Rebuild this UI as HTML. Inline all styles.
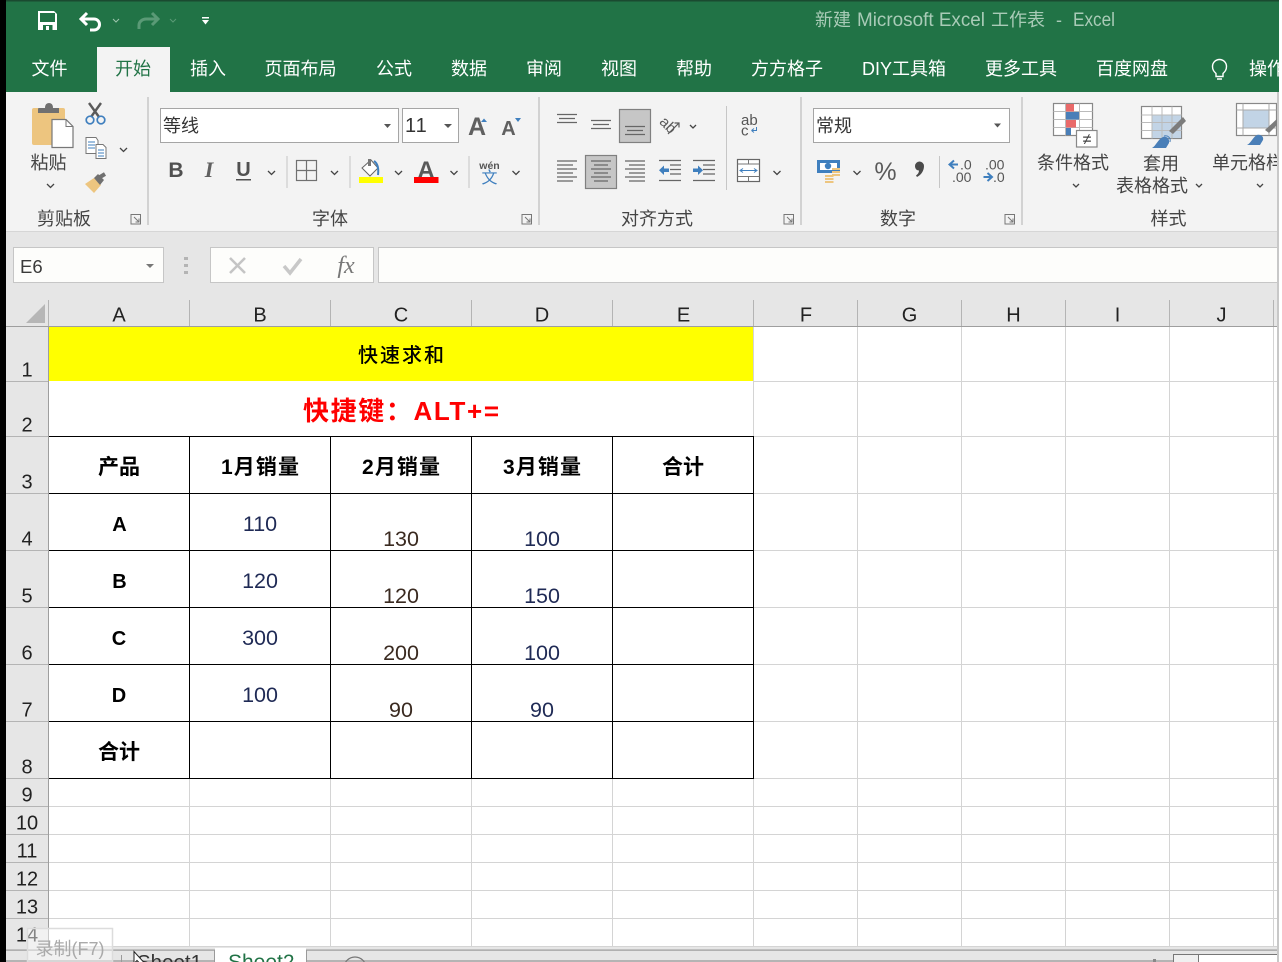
<!DOCTYPE html>
<html><head><meta charset="utf-8"><style>
html,body{margin:0;padding:0;background:#fff;width:1282px;height:962px;overflow:hidden}
svg{display:block}
text{font-family:"Liberation Sans","Noto Sans CJK SC",sans-serif}
.r{font-size:18px;fill:#444;text-anchor:middle}
.t{font-size:18px;fill:#fff;text-anchor:middle}
.h{font-size:20px;fill:#222;text-anchor:middle}
.n{font-size:21.500px;fill:#1f2a55;text-anchor:middle}
.m{font-size:21.500px;fill:#3a2a20;text-anchor:middle}
.b{font-size:20px;fill:#000;text-anchor:middle;font-weight:bold}
.c{fill:none;stroke:#444;stroke-width:1.3}
.l{fill:none;stroke:#666;stroke-width:1.200}
</style></head><body>
<svg width="1282" height="962" viewBox="0 0 1282 962" xmlns="http://www.w3.org/2000/svg">
<rect width="1282" height="962" fill="#fff"/>
<rect x="0" y="0" width="1279" height="92" fill="#217346"/>
<rect x="0" y="0" width="1279" height="1.500" fill="#1a4a30"/>
<rect x="97" y="47" width="73" height="45" fill="#f3f3f3"/>

<!-- QAT -->
<path d="M38 11h16l3 3v16H38z" fill="#fff"/><rect x="40" y="13" width="15" height="9" fill="#217346"/><rect x="43" y="25" width="9.500" height="5" fill="#217346"/><rect x="46" y="26" width="3" height="4" fill="#fff"/>
<path d="M87 13l-6 6 6 6M81 19h13a5.500 5.500 0 0 1 0 11h-4" fill="none" stroke="#fff" stroke-width="3"/>
<path d="M113 19l3 3 3-3" fill="none" stroke="#9fc5ae" stroke-width="1"/>
<path d="M152 13l6 6-6 6M158 19h-12c-4 0-7 3-7 6v4" fill="none" stroke="#5a9a76" stroke-width="3"/>
<path d="M170 19l3 3 3-3" fill="none" stroke="#5a9a76" stroke-width="1"/>
<rect x="202" y="17" width="7" height="1.500" fill="#fff"/><path d="M202 20h7l-3.500 4.500z" fill="#fff"/>
<text x="815" y="26" font-size="18" fill="#a9cbb7">新建</text>
<text x="857" y="26" font-size="19" fill="#a9cbb7" textLength="128" lengthAdjust="spacingAndGlyphs">Microsoft Excel</text>
<text x="991" y="26" font-size="18" fill="#a9cbb7">工作表</text>
<text x="1056" y="26" font-size="18" fill="#a9cbb7">-</text>
<text x="1073" y="26" font-size="19" fill="#a9cbb7" textLength="42" lengthAdjust="spacingAndGlyphs">Excel</text>

<!-- tabs -->
<text class="t" x="49.500" y="75">文件</text>
<text class="t" x="133" y="75" style="fill:#217346">开始</text>
<text class="t" x="208" y="75">插入</text>
<text class="t" x="300.500" y="75">页面布局</text>
<text class="t" x="394" y="75">公式</text>
<text class="t" x="469" y="75">数据</text>
<text class="t" x="544" y="75">审阅</text>
<text class="t" x="619" y="75">视图</text>
<text class="t" x="694" y="75">帮助</text>
<text class="t" x="787" y="75">方方格子</text>
<text class="t" x="904" y="75">DIY工具箱</text>
<text class="t" x="1021" y="75">更多工具</text>
<text class="t" x="1132" y="75">百度网盘</text>
<path d="M1216 77.500v-3c-2-2-3.500-3.500-3.500-7a7 7 0 0 1 14 0c0 3.500-1.500 5-3.500 7v3zM1217 80h5" fill="none" stroke="#fff" stroke-width="1.400" transform="translate(0,-1)"/>
<text class="t" x="1249" y="75" style="text-anchor:start">操作</text>
<rect x="1279" y="0" width="3" height="92" fill="#fff"/>

<!-- ribbon -->
<rect x="0" y="92" width="1279" height="139" fill="#f3f3f3"/>
<rect x="0" y="231" width="1279" height="1.500" fill="#d6d6d6"/>
<rect x="0" y="232" width="1279" height="95" fill="#e6e6e6"/>
<g stroke="#c0c0c0" stroke-width="1.300"><line x1="148" y1="97" x2="148" y2="225"/><line x1="539" y1="97" x2="539" y2="225"/><line x1="801" y1="97" x2="801" y2="225"/><line x1="1022" y1="97" x2="1022" y2="225"/></g>

<!-- clipboard -->
<rect x="32" y="108" width="33" height="37" rx="2" fill="#edc57f"/>
<path d="M38 113v-4q0-1 1-1h6q0-5 4-5t4 5h6v5z" fill="#707070"/>
<path d="M52 119.500h14l7 7v21H52z" fill="#fff" stroke="#777" stroke-width="1.200"/><path d="M66 119.500v7h7" fill="none" stroke="#777"/>
<text class="r" x="48.500" y="169">粘贴</text>
<path d="M47 184l3.500 3.500 3.500-3.500" class="c"/>
<path d="M89 103l10 14M101 103l-10 14" stroke="#5a5a5a" stroke-width="2.400" fill="none"/>
<circle cx="90" cy="120" r="3.800" fill="none" stroke="#3f7fbe" stroke-width="1.700"/><circle cx="101" cy="120" r="3.800" fill="none" stroke="#3f7fbe" stroke-width="1.700"/>
<path d="M86 137.500h10l2 3v13H86z" fill="#fff" stroke="#777"/><path d="M88 142h7M88 145h7M88 148h7" stroke="#3f7fbe"/>
<path d="M96 144.500h7l3 3v11H96z" fill="#fff" stroke="#777"/><path d="M98 150h6M98 153h6M98 156h6" stroke="#3f7fbe"/>
<path d="M120 148l3.500 3.500 3.500-3.500" class="c"/>
<path d="M85 184l9-6 7 7-7 8z" fill="#edc57f"/><path d="M94 178l4-4 6 6-4 5z" fill="#707070"/><path d="M100 177l5-3" stroke="#707070" stroke-width="4"/>
<text class="r" x="64" y="225">剪贴板</text>
<path d="M131 214.500h9.500v9.500h-9.500z M134 217l5 5M139 218.500v3.500h-3.500" fill="none" stroke="#777"/>

<!-- font -->
<rect x="160.500" y="108.500" width="238" height="34" fill="#fff" stroke="#a5a5a5" stroke-width="1"/>
<text x="163" y="132" font-size="18" fill="#333">等线</text>
<path d="M384 124h7l-3.500 4z" fill="#555"/>
<rect x="402.500" y="108.500" width="56" height="34" fill="#fff" stroke="#a5a5a5" stroke-width="1"/>
<text x="405" y="132" font-size="20" fill="#333" letter-spacing="1">11</text>
<path d="M444 124h8l-4 4z" fill="#555"/>
<text x="477" y="135" font-size="25" text-anchor="middle" fill="#606060" font-weight="bold">A</text>
<path d="M481 122l3-3.500 3 3.500z" fill="#3f7fbe"/>
<text x="508.500" y="135" font-size="20" text-anchor="middle" fill="#606060" font-weight="bold">A</text>
<path d="M515 118h6l-3 4z" fill="#3f7fbe"/>
<text x="176" y="177" font-size="21" font-weight="bold" text-anchor="middle" fill="#505050">B</text>
<text x="209" y="177" font-size="22" font-weight="bold" font-style="italic" text-anchor="middle" fill="#606060" style="font-family:'Liberation Serif',serif">I</text>
<text x="243.500" y="176" font-size="20" font-weight="bold" text-anchor="middle" fill="#505050">U</text>
<rect x="236" y="179" width="15" height="1.500" fill="#505050"/>
<path d="M268 171l3.500 3.500 3.500-3.500" class="c"/>
<line x1="287" y1="156" x2="287" y2="188" stroke="#c6c6c6"/>
<rect x="296.500" y="160.500" width="20" height="20" fill="none" stroke="#707070" stroke-width="1.200"/><path d="M306.500 160.500v20M296.500 170.500h20" stroke="#707070" stroke-width="1.200"/>
<path d="M331 171l3.500 3.500 3.500-3.500" class="c"/>
<line x1="350" y1="156" x2="350" y2="188" stroke="#c6c6c6"/>
<path d="M362 168l9-8 7 8-8 8z" fill="#fff" stroke="#666"/><path d="M368 159h3v7h-3z" fill="#777"/><path d="M374 161c3 2 5 6 4 14" stroke="#3f7fbe" stroke-width="2" fill="none"/>
<rect x="359" y="177" width="24" height="6" fill="#ff0"/>
<path d="M395 171l3.500 3.500 3.500-3.500" class="c"/>
<text x="426" y="178" font-size="24" font-weight="bold" text-anchor="middle" fill="#5a5a5a">A</text>
<rect x="414" y="177" width="24.500" height="6" fill="#f00"/>
<path d="M450.500 171l3.500 3.500 3.500-3.500" class="c"/>
<line x1="469" y1="156" x2="469" y2="188" stroke="#c6c6c6"/>
<text x="489.500" y="169" font-size="10.500" font-weight="bold" text-anchor="middle" fill="#555">wén</text>
<text x="489.500" y="183" font-size="16" text-anchor="middle" fill="#3f7fbe">文</text>
<path d="M512.500 171l3.500 3.500 3.500-3.500" class="c"/>
<text class="r" x="330" y="225">字体</text>
<path d="M522 214.500h9.500v9.500H522z M525 217l5 5M530 218.500v3.500h-3.500" fill="none" stroke="#777"/>

<!-- alignment -->
<rect x="619.500" y="109.500" width="31" height="33" fill="#c6c6c6" stroke="#808080" stroke-width="1.200"/>
<rect x="585.500" y="155.500" width="31" height="33" fill="#c6c6c6" stroke="#808080" stroke-width="1.200"/>
<path class="l" d="M557 114.500h20M559 118.500h16M557 122.500h20M591 120.500h20M593 124.500h16M591 128.500h20M625 126.500h20M627 130.500h16M625 134.500h20"/>
<path class="l" d="M557 161h20M557 165h16M557 169h20M557 173h16M557 177h20M557 181h16"/>
<path class="l" d="M591 161h20M594 165h14M591 169h20M594 173h14M591 177h20M594 181h14"/>
<path class="l" d="M625 161h20M629 165h16M625 169h20M629 173h16M625 177h20M629 181h16"/>
<path class="l" d="M659 160.500h22M670 165h11M670 169.500h11M670 174h11M659 180.500h22"/>
<path d="M664 165.500v3h5v3.500h-5v3l-5-4.750z" fill="#3f7fbe"/>
<path class="l" d="M693 160.500h22M703 165h12M703 169.500h12M703 174h12M693 180.500h22"/>
<path d="M698 165.500v3h-5v3.500h5v3l5-4.750z" fill="#3f7fbe"/>
<text x="668" y="130" font-size="15" fill="#5a5a5a" text-anchor="middle" transform="rotate(45 668 125)">ab</text>
<path d="M668 134l11-11m-4.500 0h4.500v4.500" fill="none" stroke="#5a5a5a" stroke-width="1.200"/>
<path d="M690 125l3 3 3-3" class="c"/>
<line x1="726.500" y1="106" x2="726.500" y2="190" stroke="#c6c6c6"/>
<text x="741" y="125" font-size="15" fill="#555">ab</text><text x="741" y="135.500" font-size="15" fill="#555">c</text>
<path d="M756.500 127v3.500h-5M751.500 130.500l2.500-2M751.500 130.500l2.500 2" fill="none" stroke="#3f7fbe"/>
<rect x="737.500" y="159.500" width="22" height="22" fill="#fff" stroke="#666" stroke-width="1.200"/>
<path d="M737.500 164h22M737.500 176.500h22M748.500 159.500v4.500M748.500 176.500v5" stroke="#777" fill="none"/>
<path d="M741 170.500h15M743 168.500l-3 2 3 2M754 168.500l3 2-3 2" stroke="#3f7fbe" fill="none"/>
<path d="M773.500 171l3.500 3.500 3.500-3.500" class="c"/>
<text class="r" x="657" y="225">对齐方式</text>
<path d="M784 214.500h9.500v9.500H784z M787 217l5 5M792 218.500v3.500h-3.500" fill="none" stroke="#777"/>

<!-- number -->
<rect x="813.500" y="108.500" width="196" height="34" fill="#fff" stroke="#a5a5a5"/>
<text x="816" y="132" font-size="18" fill="#333">常规</text>
<path d="M994 123.500h7l-3.500 4z" fill="#555"/>
<rect x="817" y="160" width="23" height="13" fill="#3f7fbe"/><rect x="820" y="163" width="17" height="7" fill="#fff"/><circle cx="828" cy="166" r="3.200" fill="#3f7fbe"/>
<path d="M825 175h8.500v2h-8.500zM825 178h8.500v2h-8.500zM825 181h8.500v2h-8.500zM832 168h8v2h-8zM832 171h8v2h-8zM832 174h8v2h-8z" fill="#edc57f"/>
<path d="M853.500 171l3.500 3.500 3.500-3.500" class="c"/>
<text x="885.500" y="180" font-size="25" text-anchor="middle" fill="#5a5a5a">%</text>
<path d="M915 166a4.500 4.500 0 1 1 9 0c0 5-3 9-7 11l-1-1.500c2-1.500 3-3 3-5-2.500 0-4-2-4-4.500z" fill="#4a4a4a"/>
<line x1="939.500" y1="156" x2="939.500" y2="188" stroke="#c6c6c6"/>
<path d="M954 160.500l-4.500 4 4.500 4M950 164.500h8" fill="none" stroke="#3f7fbe" stroke-width="2"/>
<text x="960" y="169.500" font-size="14" fill="#555">.0</text><text x="952" y="182" font-size="14" fill="#555">.00</text>
<text x="985" y="169.500" font-size="14" fill="#555">.00</text>
<path d="M987.500 173l4.500 4-4.500 4M992 177h-8.500" fill="none" stroke="#3f7fbe" stroke-width="2"/>
<text x="993" y="182" font-size="14" fill="#555">.0</text>
<text class="r" x="898" y="225">数字</text>
<path d="M1005 214.500h9.500v9.500H1005z M1008 217l5 5M1013 218.500v3.500h-3.500" fill="none" stroke="#777"/>

<!-- styles -->
<rect x="1053.500" y="103.500" width="39" height="32" fill="#fff" stroke="#888" stroke-width="1.200"/>
<path d="M1053.500 111.500h39M1053.500 119.500h39M1053.500 127.500h39M1065.500 103.500v32M1079.500 103.500v32" stroke="#bbb" fill="none"/>
<rect x="1066" y="104" width="8" height="7.500" fill="#e96a6a"/><rect x="1066" y="112" width="13" height="7.500" fill="#4a7fb8"/><rect x="1066" y="120" width="10" height="7.500" fill="#e96a6a"/><rect x="1066" y="128" width="5" height="7" fill="#4a7fb8"/>
<rect x="1076.500" y="130.500" width="20.500" height="16.500" fill="#fff" stroke="#888" stroke-width="1.200"/>
<text x="1087" y="144.500" font-size="16" text-anchor="middle" fill="#444">≠</text>
<text class="r" x="1073" y="169">条件格式</text>
<path d="M1073 184l3 3 3-3" class="c"/>

<rect x="1141.500" y="106.500" width="40" height="32" fill="#fff" stroke="#888" stroke-width="1.200"/>
<rect x="1152" y="115" width="29" height="23" fill="#c2d4e6"/>
<path d="M1141.500 115h40M1141.500 122.500h40M1141.500 130.500h40M1152 106.500v32M1162 106.500v32M1172 106.500v32" stroke="#bbb" fill="none"/>
<path d="M1169 131l14-14 3 4-13 13z" fill="#7c7c7c"/>
<path d="M1152 148c4-2 6-9 11-11 4-1 7 2 6 6l-3 5z" fill="#4a7fb8"/><path d="M1164 136c4-1 7 2 6 6" fill="none" stroke="#4a7fb8"/>
<text class="r" x="1161" y="170">套用</text>
<text class="r" x="1152" y="192">表格格式</text>
<path d="M1196 184l3 3 3-3" class="c"/>

<rect x="1236.500" y="103.500" width="40" height="32" fill="#fff" stroke="#888" stroke-width="1.200"/>
<rect x="1243" y="110" width="26" height="18" fill="#c2d4e6"/>
<path d="M1236.500 110h40M1243 103.500v32M1269 103.500v32M1236.500 128h40" stroke="#aaa" fill="none"/>
<path d="M1265 130l14-13v6l-10 10z" fill="#7c7c7c"/>
<path d="M1247 145c4-2 6-8 10-10 4-1 7 2 6 5l-3 5z" fill="#4a7fb8"/>
<text class="r" x="1212" y="169" style="text-anchor:start">单元格样式</text>
<path d="M1257 184l3 3 3-3" class="c"/>
<text class="r" x="1168.500" y="225">样式</text>
<rect x="1279" y="92" width="3" height="870" fill="#fff"/>

<!-- formula bar -->
<rect x="13.500" y="247.500" width="150" height="35" fill="#fdfdfb" stroke="#c6c6c6"/>
<text x="20" y="273" font-size="18.500" fill="#3a3a3a">E6</text>
<path d="M146 264h8l-4 4z" fill="#777"/>
<path d="M184 257h4v3h-4zM184 264h4v3h-4zM184 271h4v3h-4z" fill="#b4b4b4"/>
<rect x="210.500" y="247.500" width="163" height="35" fill="#fdfdfb" stroke="#c6c6c6"/>
<path d="M230 258l15 15M245 258l-15 15" stroke="#c4c4c4" stroke-width="2.500"/>
<path d="M284 266l6 7 11-14" fill="none" stroke="#c8c8c8" stroke-width="3.500"/>
<text x="346" y="273" font-size="24" font-style="italic" text-anchor="middle" fill="#777" style="font-family:'Liberation Serif',serif">fx</text>
<rect x="378.500" y="247.500" width="899" height="35" fill="#fdfdfb" stroke="#c6c6c6"/>

<!-- sheet -->
<rect x="0" y="327" width="49" height="635" fill="#e6e6e6"/>
<rect x="49" y="327" width="1228" height="620" fill="#fff"/>
<path d="M753.500 327v620M857.500 327v620M961.500 327v620M1065.500 327v620M1169.500 327v620M1273.500 327v620M189.500 778v169M330.500 778v169M471.500 778v169M612.500 778v169" stroke="#d4d4d4" fill="none"/>
<path d="M753 381.500h524M753 436.500h524M753 493.500h524M753 550.500h524M753 607.500h524M753 664.500h524M753 721.500h524M49 778.500h1228M49 806.500h1228M49 834.500h1228M49 862.500h1228M49 890.500h1228M49 918.500h1228M49 946.500h1228" stroke="#d4d4d4" fill="none"/>
<rect x="49" y="327" width="704" height="54" fill="#ff0"/>
<g stroke="#000" fill="none"><path d="M49 436.500h704.500M49 493.500h704.500M49 550.500h704.500M49 607.500h704.500M49 664.500h704.500M49 721.500h704.500M49 778.500h704.500M189.500 436v343M330.500 436v343M471.500 436v343M612.500 436v343M753.500 436v343"/></g>

<!-- column hdrs -->
<path d="M48.500 300v27M189.500 300v27M330.500 300v27M471.500 300v27M612.500 300v27M753.500 300v27M857.500 300v27M961.500 300v27M1065.500 300v27M1169.500 300v27M1273.500 300v27" stroke="#b4b4b4" fill="none"/>
<rect x="0" y="326" width="1277" height="1" fill="#9e9e9e"/>
<path d="M26 323l19-19v19z" fill="#b6b6b6"/>
<text class="h" x="119" y="321.500">A</text><text class="h" x="260" y="321.500">B</text><text class="h" x="401" y="321.500">C</text><text class="h" x="542" y="321.500">D</text><text class="h" x="683.500" y="321.500">E</text><text class="h" x="806" y="321.500">F</text><text class="h" x="909.500" y="321.500">G</text><text class="h" x="1013.500" y="321.500">H</text><text class="h" x="1117.500" y="321.500">I</text><text class="h" x="1221.500" y="321.500">J</text>
<!-- row hdrs -->
<path d="M48.500 327v620" stroke="#9e9e9e"/>
<path d="M6 381.500h42M6 436.500h42M6 493.500h42M6 550.500h42M6 607.500h42M6 664.500h42M6 721.500h42M6 778.500h42M6 806.500h42M6 834.500h42M6 862.500h42M6 890.500h42M6 918.500h42" stroke="#b4b4b4" fill="none"/>
<text class="h" x="27" y="376.500">1</text><text class="h" x="27" y="431.500">2</text><text class="h" x="27" y="488.500">3</text><text class="h" x="27" y="545.500">4</text><text class="h" x="27" y="602.500">5</text><text class="h" x="27" y="659.500">6</text><text class="h" x="27" y="716.500">7</text><text class="h" x="27" y="773.500">8</text><text class="h" x="27" y="801.500">9</text><text class="h" x="27" y="829.500">10</text><text class="h" x="27" y="857.500">11</text><text class="h" x="27" y="885.500">12</text><text class="h" x="27" y="913.500">13</text><text class="h" x="27" y="941.500">14</text>

<!-- cell text -->
<text x="401" y="362" font-size="20" text-anchor="middle" fill="#000" font-weight="500" textLength="86">快速求和</text>
<text x="401" y="420" font-size="26" text-anchor="middle" fill="#f00" font-weight="bold" textLength="196">快捷键：ALT+=</text>
<text class="b" x="119" y="474" style="font-size:21px">产品</text>
<text class="b" x="260" y="474" style="font-size:21px" textLength="78">1月销量</text><text class="b" x="401" y="474" style="font-size:21px" textLength="78">2月销量</text><text class="b" x="542" y="474" style="font-size:21px" textLength="78">3月销量</text><text class="b" x="683" y="474" style="font-size:21px">合计</text>
<text class="b" x="119.500" y="531">A</text><text class="b" x="119.500" y="588">B</text><text class="b" x="119" y="645">C</text><text class="b" x="119" y="702">D</text><text class="b" x="119" y="759" style="font-size:21px">合计</text>
<text class="n" x="260" y="531">110</text><text class="n" x="260" y="588">120</text><text class="n" x="260" y="645">300</text><text class="n" x="260" y="702">100</text>
<text class="m" x="401" y="546">130</text><text class="m" x="401" y="603">120</text><text class="m" x="401" y="660">200</text><text class="m" x="401" y="717">90</text>
<text class="n" x="542" y="546">100</text><text class="n" x="542" y="603">150</text><text class="n" x="542" y="660">100</text><text class="n" x="542" y="717">90</text>

<!-- bottom bar -->
<rect x="6" y="947" width="1271" height="15" fill="#e6e6e6"/>
<rect x="6" y="949.500" width="1271" height="1.200" fill="#9a9a9a"/>
<rect x="6" y="960" width="1271" height="2" fill="#b4b4b4"/>
<rect x="215" y="948" width="91" height="14" fill="#fff"/>
<path d="M214.500 950v12M306.500 950v12M121.500 955v7" stroke="#9a9a9a" fill="none"/>
<text x="137" y="969" font-size="20.500" fill="#333">Sheet1</text>
<text x="228" y="969" font-size="21" fill="#217346">Sheet2</text>
<circle cx="355" cy="968" r="11" fill="none" stroke="#777" stroke-width="1.200"/>
<rect x="1173.500" y="954.500" width="25" height="10" fill="#f0f0f0" stroke="#777"/>
<rect x="1198.500" y="954.500" width="79" height="10" fill="#fff" stroke="#777"/>
<rect x="1153" y="959" width="3" height="3" fill="#888"/>
<rect x="1277" y="92" width="2.500" height="870" fill="#c8c8c8"/>
<rect x="1279" y="92" width="3" height="870" fill="#fff"/>

<!-- recorder -->
<rect x="27.500" y="928.500" width="85" height="40" fill="#fff" fill-opacity=".45" stroke="#dcdcdc" stroke-width="1.500"/>
<text x="70" y="955" font-size="18" text-anchor="middle" fill="#aaa">录制(F7)</text>
<path d="M134 951.500v12l3-3 2 2h5z" fill="#fff" stroke="#222"/>

<rect x="0" y="0" width="6" height="962" fill="#000"/>
</svg>
</body></html>
